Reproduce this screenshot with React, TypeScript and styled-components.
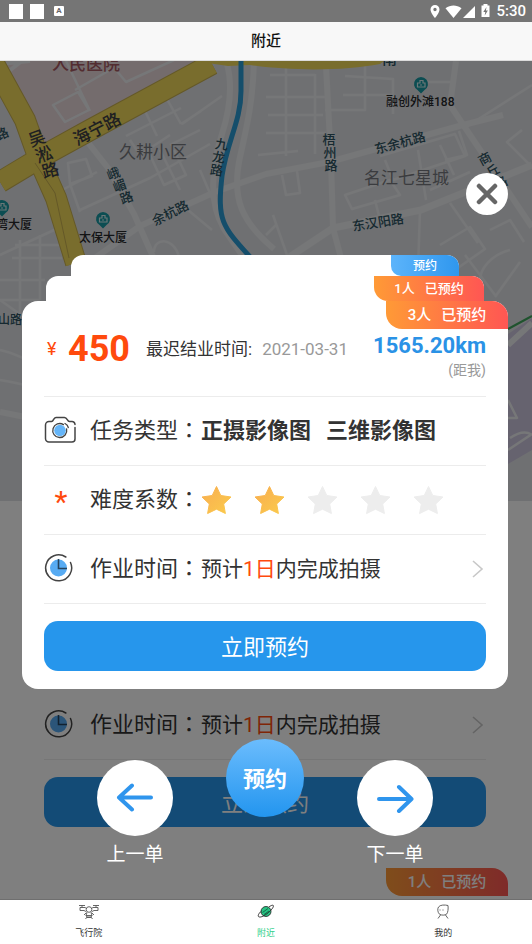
import React from "react";
import styled, { createGlobalStyle, css } from "styled-components";

const GlobalStyle = createGlobalStyle`
  * { box-sizing: border-box; }
  body {
    margin: 0;
    color: #333;
    font-family: Roboto, "Noto Sans CJK SC", sans-serif;
  }
  button { font-family: inherit; border: 0; padding: 0; cursor: pointer; }
  svg { display: block; flex: none; }
`;

const Page = styled.div`
  min-height: 100vh;
  display: grid;
  grid-template-rows: auto auto 1fr auto;
`;

const StatusBar = styled.div`
  height: 22px;
  padding: 0 6px 0 9px;
  display: flex;
  align-items: center;
  justify-content: space-between;
  background: #757575;
  color: #fff;
`;

const StatusGroup = styled.div<{ $gap: number }>`
  display: flex;
  align-items: center;
  gap: ${(p) => p.$gap}px;
`;

const Notice = styled.span`
  width: 14px;
  height: 15px;
  background: #fff;
`;

const LetterNotice = styled.span`
  width: 10px;
  height: 10px;
  margin-left: 3px;
  border-radius: 1px;
  background: #fff;
  color: #666;
  font-size: 8px;
  font-weight: 700;
  line-height: 10px;
  text-align: center;
`;

const Clock = styled.span`
  font-size: 15px;
  font-weight: 500;
  line-height: 22px;
`;

const TitleBar = styled.header`
  height: 39px;
  display: flex;
  align-items: center;
  justify-content: center;
  background: #f8f8f8;
  border-bottom: 1px solid #dcdcdc;
`;

const Title = styled.h1`
  margin: 0;
  color: #111;
  font-size: 15px;
  font-weight: 500;
  line-height: 22px;
`;

const Main = styled.main`
  position: relative;
  overflow: hidden;
  background: #fff;
`;

const Backdrop = styled.div`
  position: absolute;
  inset: 0;
  overflow: hidden;
`;

const MapDrawing = styled.svg`
  width: 100%;
  height: auto;
`;

const BackdropList = styled.div`
  margin: 190px 24px 0 22px;
  display: flex;
  flex-direction: column;
  gap: 23px;
`;

const Overlay = styled.div`
  position: relative;
  min-height: 100%;
  padding: 112px 24px 30px 22px;
  display: flex;
  flex-direction: column;
  background: rgba(0, 0, 0, 0.5);
`;

const CloseButton = styled.button`
  align-self: flex-end;
  width: 42px;
  height: 42px;
  margin-bottom: 40px;
  display: flex;
  align-items: center;
  justify-content: center;
  border-radius: 50%;
  background: #fff;
`;

const StackEdge = styled.div<{ $inset: number; $height: number }>`
  height: ${(p) => p.$height}px;
  margin: 0 ${(p) => p.$inset}px;
  display: flex;
  justify-content: flex-end;
  overflow: hidden;
  border-radius: 12px 12px 0 0;
  background: #fff;
`;

const badgeSizes = {
  small: css`
    width: 68px;
    height: 21px;
    font-size: 12px;
    border-bottom-left-radius: 10px;
  `,
  medium: css`
    width: 110px;
    height: 25px;
    font-size: 13px;
    border-bottom-left-radius: 14px;
  `,
  large: css`
    width: 122px;
    height: 28px;
    font-size: 15px;
    border-bottom-left-radius: 16px;
  `,
};

const Badge = styled.span<{ $size: keyof typeof badgeSizes; $blue?: boolean }>`
  display: flex;
  align-items: center;
  justify-content: center;
  gap: 10px;
  color: #fff;
  font-weight: 500;
  line-height: 20px;
  background: ${(p) =>
    p.$blue
      ? "linear-gradient(90deg, #5cb4fb, #2f97ee)"
      : "linear-gradient(90deg, #ff9a36, #ff5653)"};
  ${(p) => badgeSizes[p.$size]}
`;

const Card = styled.article`
  position: relative;
  padding: 0 22px 18px;
  overflow: hidden;
  border-radius: 16px;
  background: #fff;
`;

const NextCard = styled(Card)`
  min-height: 80px;
`;

const CornerBadge = styled.div`
  position: absolute;
  top: 0;
  right: 0;
`;

const Summary = styled.div`
  height: 96px;
  padding-left: 3px;
  display: flex;
  align-items: center;
  border-bottom: 1px solid #ececec;
`;

const Currency = styled.span`
  width: 21px;
  color: #ff4a0d;
  font-size: 18px;
  line-height: 24px;
`;

const Price = styled.strong`
  width: 78px;
  color: #ff4a0d;
  font-size: 36px;
  font-weight: 700;
  line-height: 40px;
`;

const Deadline = styled.span`
  font-size: 17px;
  line-height: 24px;
  white-space: nowrap;
`;

const DeadlineDate = styled.time`
  margin-left: 10px;
  color: #999;
`;

const Distance = styled.div`
  flex: 1;
  padding-top: 16px;
  display: flex;
  flex-direction: column;
  align-items: flex-end;
`;

const DistanceValue = styled.strong`
  color: #2a92e6;
  font-size: 22px;
  font-weight: 700;
  line-height: 26px;
`;

const DistanceNote = styled.span`
  color: #999;
  font-size: 14px;
  line-height: 22px;
`;

const Row = styled.div`
  height: 69px;
  display: flex;
  align-items: center;
  border-bottom: 1px solid #ececec;
  white-space: nowrap;
`;

const IconCell = styled.span`
  width: 46px;
  height: 36px;
  padding-bottom: 3px;
  display: flex;
  align-items: center;
`;

const RequiredMark = styled.span`
  width: 34px;
  padding-top: 6px;
  color: #ff4a0d;
  font-size: 30px;
  line-height: 30px;
  text-align: center;
`;

const Label = styled.span`
  width: 111px;
  font-size: 22px;
  line-height: 32px;
`;

const Colon = styled.span`
  font-family: Roboto, "Noto Sans CJK TC", sans-serif;
`;

const TypeValue = styled.strong`
  display: flex;
  gap: 15px;
  font-size: 22px;
  font-weight: 700;
  line-height: 32px;
`;

const TimeValue = styled.span`
  flex: 1;
  font-size: 21px;
  line-height: 32px;
`;

const Days = styled.span`
  color: #ff4a0d;
`;

const Stars = styled.div`
  display: flex;
  gap: 22px;
`;

const BookButton = styled.button`
  width: 100%;
  height: 50px;
  margin-top: 17px;
  padding-bottom: 3px;
  border-radius: 14px;
  background: #2696ec;
  color: #fff;
  font-size: 22px;
`;

const Actions = styled.div`
  margin-top: 50px;
  display: flex;
  justify-content: center;
  align-items: flex-start;
  gap: 53px;
`;

const StepButton = styled.button`
  margin-top: 21px;
  display: flex;
  flex-direction: column;
  align-items: center;
  gap: 5px;
  background: none;
  color: #fff;
  font-size: 19px;
  line-height: 28px;
`;

const StepCircle = styled.span`
  width: 76px;
  height: 76px;
  display: flex;
  align-items: center;
  justify-content: center;
  border-radius: 50%;
  background: #fff;
`;

const RoundButton = styled.button`
  width: 78px;
  height: 78px;
  padding-bottom: 3px;
  border-radius: 50%;
  background: linear-gradient(180deg, #6bbcfd, #2395ef);
  color: #fff;
  font-size: 22px;
  font-weight: 700;
`;

const TabBar = styled.nav`
  height: 45px;
  display: grid;
  grid-template-columns: repeat(3, 1fr);
  border-top: 1px solid #6f6f6f;
  background: #fff;
`;

const Tab = styled.a<{ $active?: boolean }>`
  padding-top: 4px;
  display: flex;
  flex-direction: column;
  align-items: center;
  gap: 6px;
  color: ${(p) => (p.$active ? "#2fd08a" : "#333")};
  font-size: 9px;
  line-height: 14px;
  text-decoration: none;
`;

const CameraIcon = () => (
  <svg width="32" height="28" viewBox="0 0 32 28" fill="none">
    <circle cx="16" cy="14.500" r="5.800" fill="#65b5f8" />
    <path d="M28 26H5a3.500 3.500 0 0 1-3.500-3.500V9A3.500 3.500 0 0 1 5 5.500h2.500c2.500 0 1.500-4 4.500-4h8.500c3 0 2.500 4 5 4H28A3 3 0 0 1 31 8.500M31 11.500V23a3 3 0 0 1-3 3" stroke="#444" strokeWidth="1.500" strokeLinecap="round" />
    <path d="M19.500 8.600A7 7 0 1 0 22.600 13" stroke="#444" strokeWidth="1.300" strokeLinecap="round" />
    <path d="M21 7.500a6 6 0 0 1 3.300 4" stroke="#444" strokeWidth="1.300" strokeLinecap="round" />
  </svg>
);

const ClockIcon = () => (
  <svg width="30" height="30" viewBox="0 0 30 30" fill="none">
    <circle cx="14.500" cy="15" r="8.500" fill="#57abf3" />
    <path d="M21.800 4A13 13 0 1 0 26.500 9.500" stroke="#444" strokeWidth="1.500" strokeLinecap="round" />
    <path d="M14.500 6v9.500H23" stroke="#24435e" strokeWidth="1.600" />
  </svg>
);

const StarIcon = ({ filled }: { filled: boolean }) => (
  <svg width="31" height="30" viewBox="0 0 31 30">
    <defs>
      <linearGradient id="starGold" x1="0" y1="0" x2="1" y2="1">
        <stop offset="0" stopColor="#f8ad50" />
        <stop offset="1" stopColor="#fbcb4c" />
      </linearGradient>
    </defs>
    <path
      d="M15.500 1.500l4.300 9 10.200 1.500-7.300 7 1.700 9.500-8.900-4.300-8.900 4.300 1.700-9.500L1 12l10.200-1.500z"
      fill={filled ? "url(#starGold)" : "#ededed"}
      stroke={filled ? "url(#starGold)" : "#ededed"}
      strokeLinejoin="round"
    />
  </svg>
);

const ChevronIcon = () => (
  <svg width="14" height="20" viewBox="0 0 14 20" fill="none">
    <path d="M1 2l9 8-9 8" stroke="#c8c8c8" strokeWidth="1.600" />
  </svg>
);

const ArrowIcon = ({ back }: { back?: boolean }) => (
  <svg width="38" height="30" viewBox="0 0 38 30" fill="none">
    <path
      d={back ? "M35 14.500H3M16 2.500L3 14.500l13 12" : "M3 16h32M23 4l12.500 12L23 28"}
      stroke="#2f95ed"
      strokeWidth="4"
      strokeLinecap="round"
      strokeLinejoin="round"
    />
  </svg>
);

const DroneIcon = () => (
  <svg width="20" height="16" viewBox="0 0 20 16" fill="none" stroke="#555" strokeWidth="0.900">
    <path d="M0 1.500h6M14 1.500h6M3 1.500v2M17 1.500v2M1 3.500h5l1.500 1M19 3.500h-5l-1.500 1M1 3.500v3h4l2 1M19 3.500v3h-4l-2 1M7.500 8.500L5 11M12.500 8.500L15 11" />
    <circle cx="10" cy="5.500" r="2.800" />
    <path d="M8 8.500l-1 3h6l-1-3M8 13l-1.500 2M12 13l1.500 2M8 13.500h4M7 11.500l1 1.500h4l1-1.500" />
  </svg>
);

const PlanetIcon = () => (
  <svg width="18" height="16" viewBox="0 0 18 16" fill="none">
    <circle cx="9" cy="7.500" r="5" fill="#28c283" stroke="#222" strokeWidth="0.800" />
    <path d="M5.500 8.500l5.500-4M7 10.500l5-3.500" stroke="#116e49" strokeWidth="1" />
    <path d="M4.500 7C1.500 9.500.5 12 1.800 12.800c2 1 6-1.300 9.700-4.300 3.500-3 5.500-6 4.800-7C15.700.8 13.800 1.500 12 3" stroke="#222" strokeWidth="0.900" />
  </svg>
);

const PersonIcon = () => (
  <svg width="14" height="16" viewBox="0 0 14 16" fill="none" stroke="#555" strokeWidth="0.900">
    <path d="M12 1.500C9 .7 4 .7 2.500 3c-1.300 2-.8 5.500 1 7.200 2 1.300 5.500 1.200 7 0 1.500-1.400 1.900-5.500 1.500-8.700zM4.500 11L2 14.500M9.500 11l2.500 3.500M3.500 6h1M6.500 6h1" />
  </svg>
);

const StatusIcons = () => (
  <svg width="62" height="16" viewBox="0 0 62 16" fill="#fff">
    <path fillRule="evenodd" d="M5 2a4.500 4.500 0 0 0-4.500 4.500C.5 10 5 15 5 15s4.500-5 4.500-8.500A4.500 4.500 0 0 0 5 2zm0 2.800a1.700 1.700 0 1 1 0 3.400 1.700 1.700 0 0 1 0-3.400z" />
    <path d="M15.500 5.200c5-3.600 11-3.600 16 0L23.500 15z" />
    <path d="M45 3v12H33z" />
    <path fillRule="evenodd" d="M53.500 1h4v1.500h2V14h-8V2.500h2zM56.500 4l-3.200 5h2l-.6 3.500 3.200-5h-2z" />
  </svg>
);

const plainLabel = { fill: "#26282b", fontSize: 12, fontWeight: 500 };
const roadLabel = { fill: "#2c5361", fontSize: 13, fontWeight: 500 };
const avenueLabel = { fill: "#3e4045", fontSize: 17, fontWeight: 500 };

const Marker = ({ x, y }: { x: number; y: number }) => (
  <g transform={`translate(${x} ${y})`}>
    <path d="M0 9.500l-3.500-3.500a7 7 0 1 1 7 0z" fill="#189aa4" />
    <path d="M-3.500 3V-1h2.500V-3.500h3V-1h2V3zM-1 1h2" fill="none" stroke="#d5eef0" strokeWidth="1.200" />
  </g>
);

const CityMap = () => (
  <MapDrawing viewBox="0 61 532 440" aria-label="附近地图" role="img">
    <rect y="61" width="532" height="440" fill="#dfe1e5" />
    <path d="M0 61h194L68 131l-34 18L0 76z" fill="#e9d8da" />
    <path d="M508 334l24-16v132l-24 14z" fill="#cdc6df" />

    <g fill="none" stroke="#edeef1" strokeWidth="2.500" strokeLinejoin="round">
      <path d="M66 61l24 50M53 105l25-13 11 18-24 12zM75 90l35-20M116 70l10 12 48-22" />
      <path d="M163 92l18 32M182 124l40-28M145 111l12 25M126 136l55-28M181 124l20-13" />
      <path d="M68 163l18-4 6 17-22 8zM70 184l10 28M62 190l35-18M80 210l70-32 60-34" />
      <path d="M130 140l10 15 30-20M150 155l14 30 22-10-12-25M180 190l-20-40M200 170l15 35" />
      <path d="M0 255l65-30M15 245h46M12 258h50M40 235v65M20 240v75M0 280h45M0 300h40" />
      <path d="M154 252c0-15 20-15 25 5M188 210l24 20M170 145l30-15" />
      <path d="M270 75h45M286 68v88M315 74v80M266 97h60M268 115h55M266 133h60M258 155l40-4M345 76l48 3v35M343 95h50M325 110h40V66M418 82h34M282 175l4 20 14-2-3-22" />
      <path d="M385 160l8 20 72-24-10-22-75 22M345 195l45-15 10 15-48 14zM375 200l5 20M418 150l8 50M440 145l14 30M420 210l-2 60M445 160l22-5-8-24M430 190l40-18" />
      <path d="M440 245l30-18 15 22-40 28M450 203l28 40M465 255l30 40M490 230l20-10 14 22M510 250c-20 5-30 20-30 30M520 262l-25 35" />
      <path d="M273 215l14 40M266 235l10-10M522 130l-15 12 25 25M532 85l-66 42" />
      <path d="M0 350c10 2 16 5 25 9M0 380c12 2 18 3 28 6M0 300l28 20" />
      <path d="M508 400l9 18h-9M510 438c12-8 18-6 22-3M508 450l24-16" />
    </g>
    <g fill="none" stroke="#edeef0" strokeWidth="6" strokeLinejoin="round">
      <path d="M0 64l30-3M0 78l22-17" strokeWidth="4" />
      <path d="M86 140l22 28 26 46 20 45M95 258l45-32 75-34 51-18 63-12 134-37 40-10" />
      <path d="M326 66l5 94 2 68 8 30" />
      <path d="M288 258l45-30 88-18 111-45" strokeWidth="7" />
      <path d="M456 61l-6 44 16 24 66 98" />
      <path d="M0 412l30 6M508 345l24-22" />
      <path d="M227 64c6 22 3 45-5 70-10 32-14 68 2 95l22 32" />
      <path d="M254 61c-1 40-7 65-14 96-9 42 2 65 34 92" />
    </g>
    <g fill="none" stroke="#c9b150" strokeWidth="22">
      <path d="M0 182l50-30 40-22 122-66" />
      <path d="M-8 60l33 60 15 42 16 36 20 65" />
    </g>
    <g fill="none" stroke="#f2da5a" strokeWidth="20">
      <path d="M0 182l50-30 40-22 122-66" />
      <path d="M-8 60l33 60 15 42 16 36 20 65" />
    </g>
    <path d="M194 61h190l-4 3c-35 7-90 7-130 1l-22 1z" fill="#f2da5a" />
    <path d="M35 163l20 30 14 65" fill="none" stroke="#c9b150" />
    <path d="M241 61v30c0 30-14 50-19 85-5 45 0 50 29 82" fill="none" stroke="#2a9dd6" strokeWidth="5" />
    <path d="M508 329l24-13" stroke="#3fa65c" strokeWidth="2" />

    <text x="52" y="70" fontSize="17" fill="#a65a62" fontWeight="500">人民医院</text>
    <text x="382" y="64" {...roadLabel} fontSize="15">南</text>
    <text x="386" y="106" {...plainLabel}>融创外滩188</text>
    <text x="79" y="242" {...plainLabel}>太保大厦</text>
    <text x="-4" y="229" {...plainLabel}>湾大厦</text>
    <text x="119" y="158" fontSize="17" fill="#77797e">久耕小区</text>
    <text x="364" y="184" fontSize="17" fill="#77797e">名江七星城</text>
    <text transform="translate(77 146) rotate(-27)" {...avenueLabel}>海宁路</text>
    <g {...avenueLabel} textAnchor="middle">
      <text transform="translate(39 144) rotate(-20)">吴</text>
      <text transform="translate(46 160) rotate(-20)">淞</text>
      <text transform="translate(52 176) rotate(-15)">路</text>
    </g>
    <g {...roadLabel} textAnchor="middle">
      <text transform="translate(115 178) rotate(-20)">峨</text>
      <text transform="translate(121 190) rotate(-20)">嵋</text>
      <text transform="translate(128 202) rotate(-20)">路</text>
      <text transform="translate(221 149) rotate(8)">九</text>
      <text transform="translate(218 162) rotate(8)">龙</text>
      <text transform="translate(216 175) rotate(8)">路</text>
      <text x="329" y="144">梧</text>
      <text x="330" y="157">州</text>
      <text x="331" y="170">路</text>
      <text transform="translate(487 163) rotate(-28)">商</text>
      <text transform="translate(495 175) rotate(-28)">丘</text>
      <text transform="translate(503 187) rotate(-28)">路</text>
    </g>
    <text transform="translate(155 226) rotate(-27)" {...roadLabel}>余杭路</text>
    <text transform="translate(376 154) rotate(-15)" {...roadLabel}>东余杭路</text>
    <text transform="translate(353 231) rotate(-9)" {...roadLabel}>东汉阳路</text>
    <text transform="translate(-2 141) rotate(-25)" {...roadLabel}>路</text>
    <text x="-2" y="324" {...roadLabel} fontSize="12">山路</text>
    <Marker x={421} y={84} />
    <Marker x={103} y={219} />
    <Marker x={2} y={207} />
  </MapDrawing>
);

const BookedBadge = ({ booked, size }: { booked: number; size: "medium" | "large" }) => (
  <Badge $size={size}>
    <span>{booked}人</span>
    <span>已预约</span>
  </Badge>
);

const WorkTimeRow = () => (
  <Row>
    <IconCell><ClockIcon /></IconCell>
    <Label>作业时间<Colon>：</Colon></Label>
    <TimeValue>
      预计<Days>1日</Days>内完成拍摄
    </TimeValue>
    <ChevronIcon />
  </Row>
);

const TaskCard = ({ booked }: { booked: number }) => (
  <Card>
    <CornerBadge>
      <BookedBadge booked={booked} size="large" />
    </CornerBadge>
    <Summary>
      <Currency>¥</Currency>
      <Price>450</Price>
      <Deadline>
        最迟结业时间:
        <DeadlineDate dateTime="2021-03-31">2021-03-31</DeadlineDate>
      </Deadline>
      <Distance>
        <DistanceValue>1565.20km</DistanceValue>
        <DistanceNote>(距我)</DistanceNote>
      </Distance>
    </Summary>
    <Row>
      <IconCell><CameraIcon /></IconCell>
      <Label>任务类型<Colon>：</Colon></Label>
      <TypeValue>
        <span>正摄影像图</span>
        <span>三维影像图</span>
      </TypeValue>
    </Row>
    <Row>
      <IconCell><RequiredMark>*</RequiredMark></IconCell>
      <Label>难度系数<Colon>：</Colon></Label>
      <Stars role="img" aria-label="2 / 5">
        {[1, 2, 3, 4, 5].map((n) => (
          <StarIcon key={n} filled={n <= 2} />
        ))}
      </Stars>
    </Row>
    <WorkTimeRow />
    <BookButton type="button">立即预约</BookButton>
  </Card>
);

export default function App() {
  return (
    <Page>
      <GlobalStyle />
      <StatusBar>
        <StatusGroup $gap={7}>
          <Notice />
          <Notice />
          <LetterNotice>A</LetterNotice>
        </StatusGroup>
        <StatusGroup $gap={4}>
          <StatusIcons />
          <Clock>5:30</Clock>
        </StatusGroup>
      </StatusBar>
      <TitleBar>
        <Title>附近</Title>
      </TitleBar>
      <Main>
        <Backdrop inert>
          <CityMap />
          <BackdropList>
            <Card>
              <WorkTimeRow />
              <BookButton type="button">立即预约</BookButton>
            </Card>
            <NextCard>
              <CornerBadge>
                <BookedBadge booked={1} size="large" />
              </CornerBadge>
            </NextCard>
          </BackdropList>
        </Backdrop>
        <Overlay role="dialog" aria-label="预约">
          <CloseButton type="button" aria-label="关闭">
            <svg width="22" height="22" viewBox="0 0 22 22">
              <path d="M3 3l16 16M19 3L3 19" stroke="#666" strokeWidth="4.500" strokeLinecap="round" />
            </svg>
          </CloseButton>
          <StackEdge $inset={49} $height={21}>
            <Badge $size="small" $blue>预约</Badge>
          </StackEdge>
          <StackEdge $inset={24} $height={25}>
            <BookedBadge booked={1} size="medium" />
          </StackEdge>
          <TaskCard booked={3} />
          <Actions>
            <StepButton type="button">
              <StepCircle><ArrowIcon back /></StepCircle>
              上一单
            </StepButton>
            <RoundButton type="button">预约</RoundButton>
            <StepButton type="button">
              <StepCircle><ArrowIcon /></StepCircle>
              下一单
            </StepButton>
          </Actions>
        </Overlay>
      </Main>
      <TabBar>
        <Tab href="#academy"><DroneIcon />飞行院</Tab>
        <Tab href="#nearby" $active aria-current="page"><PlanetIcon />附近</Tab>
        <Tab href="#me"><PersonIcon />我的</Tab>
      </TabBar>
    </Page>
  );
}
